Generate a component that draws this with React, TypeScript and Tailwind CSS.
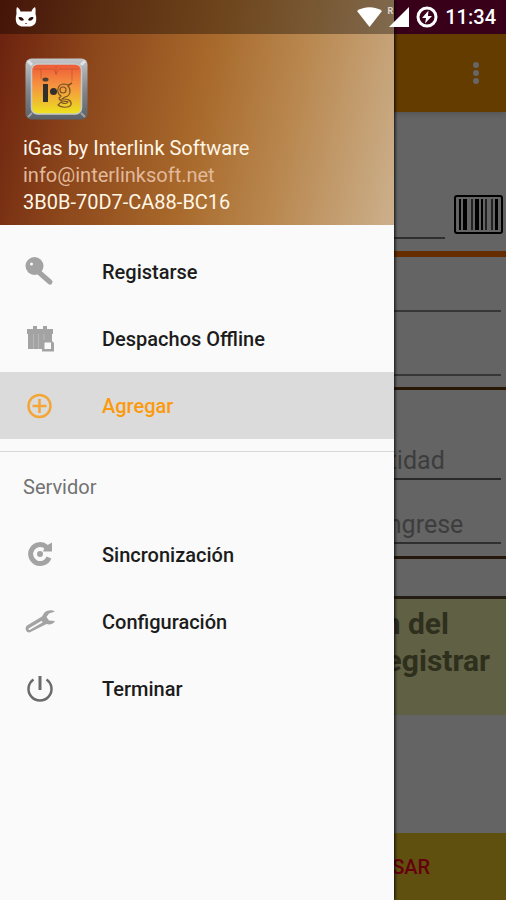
import type { ReactNode } from 'react';
import clsx from 'clsx';

interface MenuItem {
    label: string;
    icon: ReactNode;
    active?: boolean;
}

const KeyIcon = () => (
    <svg viewBox="0 0 32 32" className="size-8 shrink-0 text-[#a3a3a3]" fill="none" aria-hidden="true">
        <path d="M14 15.500 26 26" stroke="currentColor" strokeWidth="5" strokeLinecap="round" />
        <circle cx="10.500" cy="10" r="9" fill="currentColor" />
        <circle cx="7.500" cy="8" r="1.500" fill="#fafafa" />
    </svg>
);

const ParcelIcon = () => (
    <svg viewBox="0 0 32 32" className="size-8 shrink-0 text-[#a3a3a3]" fill="currentColor" aria-hidden="true">
        <path d="M9 3h4v3h6V3h4v3h6v5H3V6h6z" />
        <path d="M4 11h24v15H4z" />
        <path d="M9.500 11v15M14.500 11v15M20 11v6" stroke="#b8b8b8" strokeWidth="1" />
        <path d="M18 17h9l3 3v8.500H18z" />
        <path d="M20.500 19.500h6.500v6.500h-6.500z" fill="#fafafa" />
    </svg>
);

const AddIcon = () => (
    <svg viewBox="0 0 32 32" className="size-8 shrink-0 text-[#f3a536]" fill="none" stroke="currentColor" strokeWidth="2.500" aria-hidden="true">
        <circle cx="15.500" cy="16" r="11" />
        <path d="M15.500 9v14M8.500 16h14" />
    </svg>
);

const SyncIcon = () => (
    <svg viewBox="0 0 32 32" className="size-8 shrink-0 text-[#a3a3a3]" aria-hidden="true">
        <path d="M25 18.500A9.500 9.500 0 1 1 22.500 8" fill="none" stroke="currentColor" strokeWidth="5" />
        <path d="M28 3.500V12.500H19l2-5z" fill="currentColor" />
        <circle cx="16" cy="15" r="3" fill="currentColor" />
    </svg>
);

const WrenchIcon = () => (
    <svg viewBox="0 0 32 32" className="size-8 shrink-0 text-[#a3a3a3]" aria-hidden="true">
        <path
            d="M31 5.500C28 3.500 23.500 4 20.500 6.500L18 10.500 3 19.500C0.500 21.500 1.500 26.500 5.500 26.500L22.500 18C26 19 29.500 18 31 15L25 14.500 22.500 11 25 7.500Z"
            fill="currentColor"
        />
        <path d="M5.500 23 17.500 16" stroke="#fafafa" strokeWidth="2" strokeLinecap="round" />
    </svg>
);

const PowerIcon = () => (
    <svg viewBox="0 0 32 32" className="size-8 shrink-0 text-[#6b6b6b]" fill="none" stroke="currentColor" strokeWidth="2.500" aria-hidden="true">
        <path d="M9.500 6.500A11.500 11.500 0 1 0 22.500 6.500" />
        <path d="M16 3v14" strokeWidth="3" />
    </svg>
);

const AppLogo = () => (
    <svg viewBox="0 0 63 62" className="h-[62px] w-[63px]" role="img" aria-label="iGas">
        <defs>
            <linearGradient id="frame" x1="0" y1="0" x2="0" y2="1">
                <stop offset="0" stopColor="#c4c6ca" />
                <stop offset="0.500" stopColor="#85888c" />
                <stop offset="1" stopColor="#5c6268" />
            </linearGradient>
            <linearGradient id="face" x1="0" y1="0" x2="0" y2="1">
                <stop offset="0" stopColor="#ee5a38" />
                <stop offset="0.450" stopColor="#f6953f" />
                <stop offset="0.800" stopColor="#eec42c" />
                <stop offset="1" stopColor="#efe51c" />
            </linearGradient>
        </defs>
        <rect x="0.500" y="0.500" width="62" height="61" rx="6" fill="url(#frame)" />
        <path d="M3 3l4 4M60 3l-4 4" stroke="#e2e3e5" strokeWidth="3" />
        <path d="M3 59l4-4M60 59l-4-4" stroke="#9fa3a7" strokeWidth="2" />
        <rect x="6.500" y="6" width="50" height="50" rx="6" fill="url(#face)" stroke="#c9c9c9" strokeWidth="1.500" />
        <path d="M9 11h20l2 5 3-5h20M31 8v9M16 11v10M47 11v12" fill="none" stroke="#b9452c" strokeWidth="1" opacity="0.500" />
        <path d="M18 26h5v18h-5z" fill="#33302c" />
        <ellipse cx="20.500" cy="21.500" rx="3" ry="2" fill="#4d4030" />
        <circle cx="28.500" cy="33.500" r="3.500" fill="#33302c" />
        <g fill="none" stroke="#7a5425" strokeWidth="1.200">
            <path d="M47 25l-4 3c3 3 3 10-3 11l-3 2c6 0 10 1 9 6-2 3-10 3-13 0l3-3c2 2 6 2 7 0-2-1-9 0-9-4l2-2c-5-3-4-11 2-12 2 0 4 0 5 1z" />
            <circle cx="38" cy="32" r="3" />
        </g>
    </svg>
);

const mainItems: MenuItem[] = [
    { label: 'Registarse', icon: <KeyIcon /> },
    { label: 'Despachos Offline', icon: <ParcelIcon /> },
    { label: 'Agregar', icon: <AddIcon />, active: true },
];

const serverItems: MenuItem[] = [
    { label: 'Sincronización', icon: <SyncIcon /> },
    { label: 'Configuración', icon: <WrenchIcon /> },
    { label: 'Terminar', icon: <PowerIcon /> },
];

function MenuList({ items }: { items: MenuItem[] }) {
    return (
        <ul>
            {items.map((item) => (
                <li key={item.label}>
                    <button
                        type="button"
                        className={clsx(
                            'flex h-[67px] w-full items-center gap-[46px] px-6 text-left text-[20px] font-medium',
                            item.active ? 'bg-[#dbdbdb] text-[#fb9a0c]' : 'text-[#1c1c1c]',
                        )}
                    >
                        {item.icon}
                        {item.label}
                    </button>
                </li>
            ))}
        </ul>
    );
}

function StatusBar() {
    return (
        <div className="absolute inset-x-0 top-0 z-30 flex h-[34px] items-center justify-between bg-black/35 pr-[10px] pl-[15px] text-white">
            <svg viewBox="0 0 22 20" className="h-5 w-[22px]" aria-hidden="true">
                <path d="M2 0c2 1 3 3 3.500 4.500h11C17 3 18 1 20 0c1 2 0.500 5 0.500 7 1 3 1 6 0 9-1 2-3 3-5 3.500h-9c-2-0.500-4-1.500-5-3.500-1-3-1-6 0-9 0-2-0.500-5 0.500-7z" fill="#fff" />
                <path d="M3.500 10.500c2-1 4.500 0 5.500 2.500-2 1.500-5 0.500-5.500-2.500zM18.500 10.500c-2-1-4.500 0-5.500 2.500 2 1.500 5 0.500 5.500-2.500z" fill="#2b1008" />
                <path d="M10 16.500h2" stroke="#8d6d60" />
            </svg>
            <div className="flex items-center">
                <svg viewBox="0 0 26 20" className="h-5 w-[26px]" fill="#fff" aria-hidden="true">
                    <path d="M0 4C7-1 18-1 25 4L12.500 20z" />
                </svg>
                <span className="ml-1 self-start text-[9px] leading-3 font-bold text-white/75">R</span>
                <svg viewBox="0 0 20 20" className="-ml-1 h-5 w-5" fill="#fff" aria-hidden="true">
                    <path d="M20 0v20H0z" />
                </svg>
                <svg viewBox="0 0 22 22" className="mx-[7px] size-[22px]" aria-hidden="true">
                    <circle cx="11" cy="11" r="9" fill="none" stroke="#fff" strokeWidth="3" />
                    <path d="M12.500 4.500 6 12h4l-1 5.500L16 10h-4z" fill="#fff" />
                </svg>
                <time className="text-[20px] leading-6 font-medium">11:34</time>
            </div>
        </div>
    );
}

function DispatchScreen() {
    return (
        <main className="flex min-h-screen flex-col bg-[#fafafa]">
            <header className="flex h-[112px] items-end justify-end border-t-[34px] border-[#db0064] bg-[#fa9600] pr-[18px] shadow-md">
                <button type="button" aria-label="Más opciones" className="flex h-[78px] w-6 items-center justify-center">
                    <svg viewBox="0 0 6 24" className="h-6 w-[6px]" fill="#fff" aria-hidden="true">
                        <circle cx="3" cy="4" r="3" />
                        <circle cx="3" cy="12" r="3" />
                        <circle cx="3" cy="20" r="3" />
                    </svg>
                </button>
            </header>

            <section className="flex h-[139px] items-end gap-[9px] pr-[3px] pb-3">
                <input type="text" aria-label="Código" className="h-12 min-w-0 flex-1 border-b-2 border-[#777]" />
                <button type="button" aria-label="Leer código de barras" className="mb-[5px]">
                    <svg viewBox="0 0 49 39" className="h-[39px] w-[49px]" aria-hidden="true">
                        <rect x="1" y="1" width="47" height="37" rx="2" fill="none" stroke="#000" strokeWidth="2" />
                        <path d="M5 4h2v31H5zM9 4h4v31H9zM21 4h4v31h-4zM27 4h2v31h-2zM41 4h3v31h-3z" />
                        <path d="M17 4h2v31h-2zM31 4h2v31h-2zM37 4h2v31h-2z" fill="#555" />
                    </svg>
                </button>
            </section>
            <div className="h-[6px] bg-[#ff7000]" />

            <section className="flex h-[130px] flex-col items-end pr-[5px]">
                <input type="text" aria-label="Placa" className="h-[55px] w-full border-b-2 border-[#888]" />
                <input type="text" aria-label="Kilometraje" className="mt-2 h-14 w-full border-b-2 border-[#888]" />
            </section>
            <div className="h-[3px] bg-[#6a3c10]" />

            <section className="flex h-[166px] flex-col items-end pr-[5px] text-[25px] leading-8">
                <div className="mt-[55px] flex w-full justify-end border-b-2 border-[#666] pb-px">
                    <input type="text" aria-label="Cantidad" placeholder="Cantidad" className="w-[156px] placeholder:text-[#999]" />
                </div>
                <div className="mt-[29px] flex w-full justify-end border-b-2 border-[#777] pb-px">
                    <input type="text" aria-label="Ingrese" placeholder="Ingrese" className="w-[120px] placeholder:text-[#999]" />
                </div>
            </section>
            <div className="h-[3px] bg-[#5c3c1c]" />
            <div className="h-[37px]" />
            <div className="h-[3px] bg-[#5c4a30]" />

            <section className="h-[116px] bg-[#f0f0ac] pt-[6px] text-right text-[30px] leading-[37px] font-bold text-[#77774a]">
                <p className="pr-[57px]">Información del</p>
                <p className="pr-[16px]">registrar</p>
            </section>

            <footer className="mt-auto grid h-[67px] grid-cols-2 bg-[#f0c828]">
                <button type="button" className="col-start-2 text-[20px] font-medium text-[#ff0020]">
                    PROCESAR
                </button>
            </footer>
        </main>
    );
}

export default function App() {
    return (
        <div className="relative min-h-screen overflow-hidden font-['Roboto',sans-serif]">
            <DispatchScreen />
            <div className="absolute inset-0 z-10 bg-black/60" />

            {/* Navigation drawer */}
            <aside className="absolute inset-y-0 left-0 z-20 w-[calc(100%-112px)] bg-[#fafafa] shadow-[1px_0_3px_0_rgba(0,0,0,0.900)]">
                <header className="flex h-[225px] flex-col bg-[linear-gradient(102deg,#6a200e_0%,#8a441a_22%,#a8692b_50%,#b98850_72%,#ccb08c_100%)] px-[23px] pt-[58px] text-[20px] leading-[27px] text-[#fff6e6]">
                    <div className="mb-[15px] pl-[2px]">
                        <AppLogo />
                    </div>
                    <p>iGas by Interlink Software</p>
                    <p className="text-[#e2b99a]">info@interlinksoft.net</p>
                    <p>3B0B-70D7-CA88-BC16</p>
                </header>

                <nav className="pt-[13px]">
                    <MenuList items={mainItems} />
                    <div className="mt-3 border-t border-[#d8d8d8]">
                        <h2 className="flex h-[69px] items-center px-[23px] text-[20px] text-[#727272]">Servidor</h2>
                        <MenuList items={serverItems} />
                    </div>
                </nav>
            </aside>

            <StatusBar />
        </div>
    );
}
